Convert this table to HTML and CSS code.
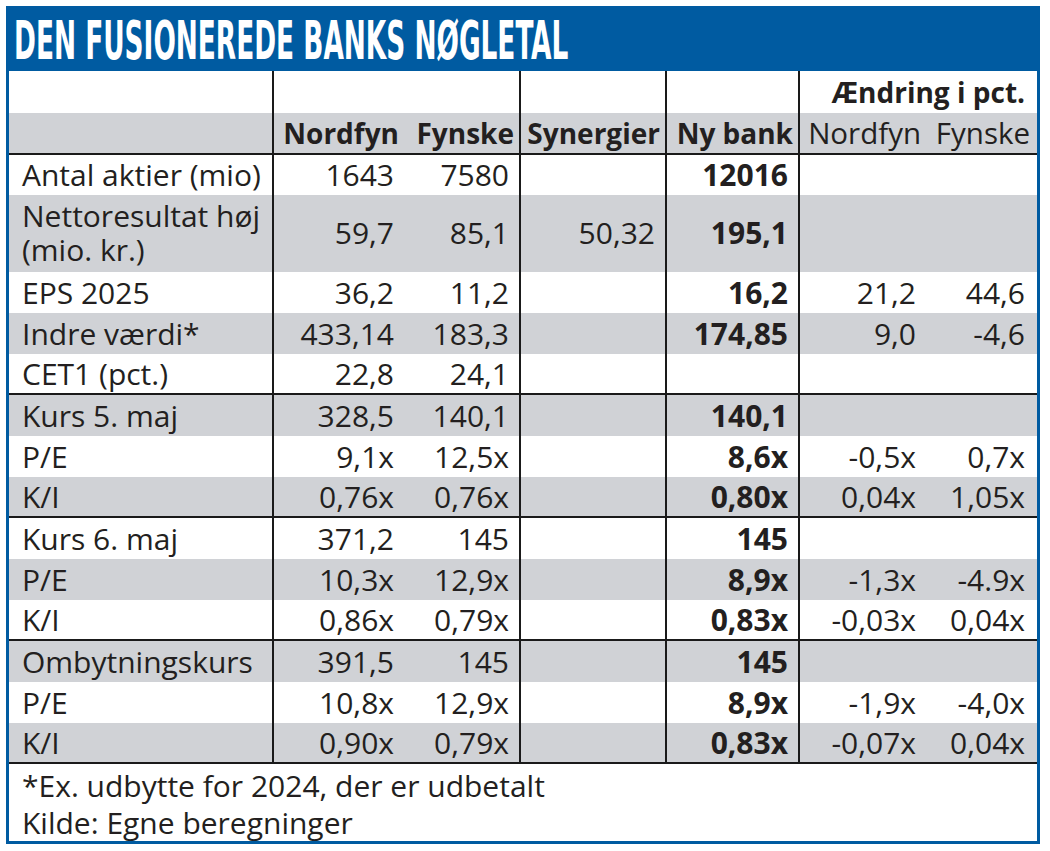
FILE: index.html
```html
<!DOCTYPE html>
<html lang="da">
<head>
<meta charset="utf-8">
<title>Den fusionerede banks nøgletal</title>
<link rel="stylesheet" href="styles.css">
</head>
<body>
<div class="frame">
  <div class="title"><span class="title-text">DEN FUSIONEREDE BANKS NØGLETAL</span></div>
  <table class="data">
    <colgroup>
      <col class="c-label"><col class="c-n"><col class="c-f"><col class="c-s"><col class="c-ny"><col class="c-an"><col class="c-af">
    </colgroup>
    <thead>
      <tr class="h1">
        <th class="lab vl"></th><th></th><th class="vl"></th><th class="vl"></th><th class="vl"></th>
        <th class="grp" colspan="2">Ændring i pct.</th>
      </tr>
      <tr class="h2 g end">
        <th class="lab vl"></th><th>Nordfyn</th><th class="vl">Fynske</th><th class="vl">Synergier</th><th class="vl">Ny bank</th>
        <th class="reg">Nordfyn</th><th class="reg">Fynske</th>
      </tr>
    </thead>
    <tbody>
      <tr class="r40">
        <td class="lab vl">Antal aktier (mio)</td><td>1643</td><td class="vl">7580</td><td class="vl"></td><td class="vl b">12016</td><td></td><td></td>
      </tr>
      <tr class="g two">
        <td class="lab vl">Nettoresultat høj<br>(mio. kr.)</td><td>59,7</td><td class="vl">85,1</td><td class="vl">50,32</td><td class="vl b">195,1</td><td></td><td></td>
      </tr>
      <tr>
        <td class="lab vl">EPS 2025</td><td>36,2</td><td class="vl">11,2</td><td class="vl"></td><td class="vl b">16,2</td><td>21,2</td><td>44,6</td>
      </tr>
      <tr class="g">
        <td class="lab vl">Indre værdi*</td><td>433,14</td><td class="vl">183,3</td><td class="vl"></td><td class="vl b">174,85</td><td>9,0</td><td>-4,6</td>
      </tr>
      <tr class="end">
        <td class="lab vl">CET1 (pct.)</td><td>22,8</td><td class="vl">24,1</td><td class="vl"></td><td class="vl b"></td><td></td><td></td>
      </tr>
      <tr class="g">
        <td class="lab vl">Kurs 5. maj</td><td>328,5</td><td class="vl">140,1</td><td class="vl"></td><td class="vl b">140,1</td><td></td><td></td>
      </tr>
      <tr>
        <td class="lab vl">P/E</td><td>9,1x</td><td class="vl">12,5x</td><td class="vl"></td><td class="vl b">8,6x</td><td>-0,5x</td><td>0,7x</td>
      </tr>
      <tr class="g end">
        <td class="lab vl">K/I</td><td>0,76x</td><td class="vl">0,76x</td><td class="vl"></td><td class="vl b">0,80x</td><td>0,04x</td><td>1,05x</td>
      </tr>
      <tr>
        <td class="lab vl">Kurs 6. maj</td><td>371,2</td><td class="vl">145</td><td class="vl"></td><td class="vl b">145</td><td></td><td></td>
      </tr>
      <tr class="g">
        <td class="lab vl">P/E</td><td>10,3x</td><td class="vl">12,9x</td><td class="vl"></td><td class="vl b">8,9x</td><td>-1,3x</td><td>-4.9x</td>
      </tr>
      <tr class="end">
        <td class="lab vl">K/I</td><td>0,86x</td><td class="vl">0,79x</td><td class="vl"></td><td class="vl b">0,83x</td><td>-0,03x</td><td>0,04x</td>
      </tr>
      <tr class="g">
        <td class="lab vl">Ombytningskurs</td><td>391,5</td><td class="vl">145</td><td class="vl"></td><td class="vl b">145</td><td></td><td></td>
      </tr>
      <tr>
        <td class="lab vl">P/E</td><td>10,8x</td><td class="vl">12,9x</td><td class="vl"></td><td class="vl b">8,9x</td><td>-1,9x</td><td>-4,0x</td>
      </tr>
      <tr class="g end">
        <td class="lab vl">K/I</td><td>0,90x</td><td class="vl">0,79x</td><td class="vl"></td><td class="vl b">0,83x</td><td>-0,07x</td><td>0,04x</td>
      </tr>
    </tbody>
    <tfoot>
      <tr class="foot">
        <td colspan="7">*Ex. udbytte for 2024, der er udbetalt<br>Kilde: Egne beregninger</td>
      </tr>
    </tfoot>
  </table>
</div>
</body>
</html>
```
FILE: styles.css
```css
* {
  box-sizing: border-box;
}

body {
  margin: 0;
  background: #ffffff;
  font-family: "Open Sans", "Liberation Sans", sans-serif;
  color: #231f20;
}

.frame {
  margin: 6px 0 0 6px;
  width: 1034px;
  height: 838px;
  border: 3px solid #005ba1;
  background: #ffffff;
  overflow: hidden;
}

.title {
  height: 62px;
  background: #005ba1;
  color: #ffffff;
  padding: 2px 0 0 5px;
  overflow: hidden;
  white-space: nowrap;
}

.title-text {
  display: inline-block;
  font-family: "DejaVu Sans Condensed", "DejaVu Sans", sans-serif;
  font-stretch: condensed;
  font-weight: 700;
  font-size: 53px;
  line-height: 59px;
  transform: scaleX(0.553);
  transform-origin: left center;
}

.data {
  width: 1028px;
  border-collapse: separate;
  border-spacing: 0;
  table-layout: fixed;
}

.c-label { width: 265px; }
.c-n { width: 132px; }
.c-f { width: 115px; }
.c-s { width: 146px; }
.c-ny { width: 133px; }
.c-an { width: 128px; }
.c-af { width: 109px; }

td,
th {
  padding: 0 12px 0 0;
  text-align: right;
  font-size: 30px;
  line-height: 41px;
  font-weight: 400;
  white-space: nowrap;
  vertical-align: middle;
}

td.vl {
  padding-right: 10px;
}

.vl {
  border-right: 2px solid #1a1a1a;
}

.lab {
  text-align: left;
  padding-left: 13px;
}

.b {
  font-weight: 700;
}

.g td,
.g th {
  background: #d0d2d6;
}

.end td,
.end th {
  border-bottom: 2px solid #1a1a1a;
  line-height: 39px;
}

.h1 th {
  font-size: 28px;
  font-weight: 700;
  line-height: 42px;
  padding-right: 7px;
}

.h1 th.vl {
  padding-right: 5px;
}

.h1 th.grp {
  padding-right: 12px;
}

.h2 th {
  font-size: 28px;
  font-weight: 700;
  line-height: 40px;
  padding-right: 7px;
}

.h2 th.vl {
  padding-right: 5px;
}

.h2 th.reg {
  font-weight: 400;
  font-size: 29.5px;
  padding-right: 7px;
}

.r40 td {
  line-height: 40px;
}

.two td {
  line-height: 34px;
  padding-top: 4px;
  padding-bottom: 5px;
}

.foot td {
  text-align: left;
  padding: 3px 13px 0;
  line-height: 37px;
  border: 0;
}
```
